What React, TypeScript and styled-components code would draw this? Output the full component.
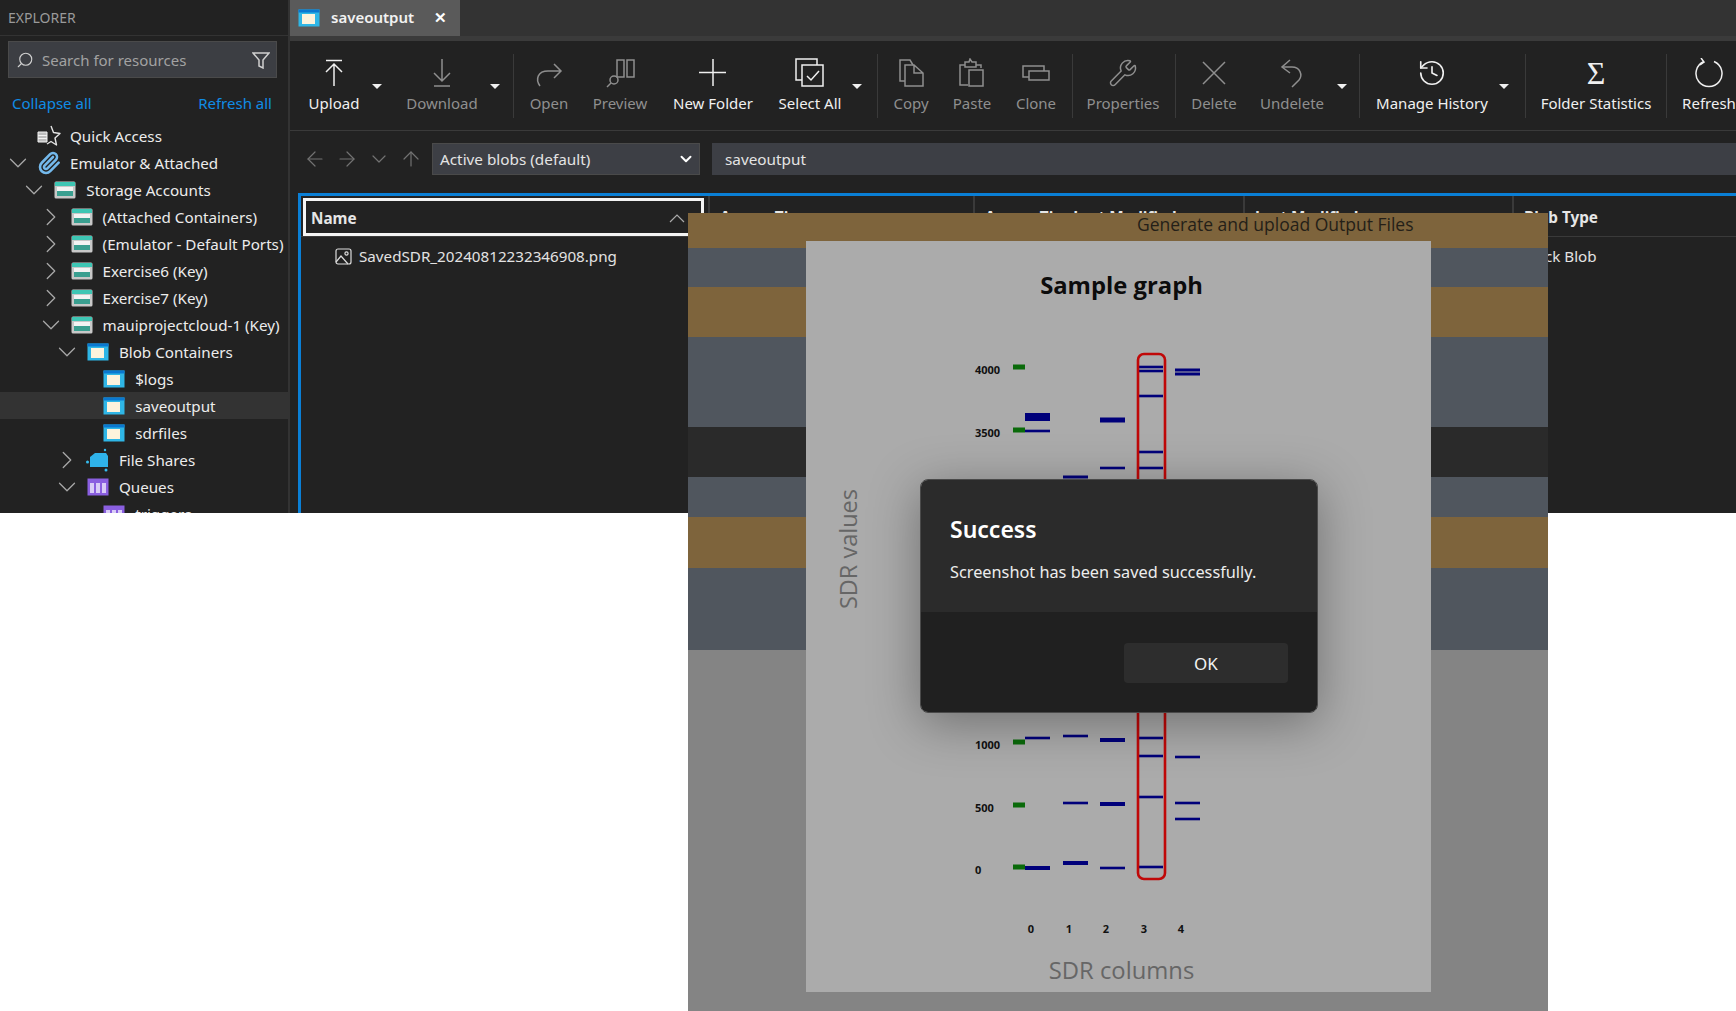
import {type FC, type ReactNode} from "react";
import styled, {createGlobalStyle} from "styled-components";
import {ArrowLeft, ArrowRight, ArrowUp, ChevronDown, ChevronRight, History, Paperclip, Search, Wrench} from "lucide-react";

const GlobalStyle = createGlobalStyle`
    html, body {
        margin: 0;
        background: #fff;
        overflow: hidden;
    }

    * {
        box-sizing: border-box;
    }
`;

const FONT = `"Noto Sans", "Open Sans", sans-serif`;

const SigmaGlyph = styled.div`
    font-family: "Liberation Serif", serif;
    font-size: 32px;
    line-height: 30px;
`;

const StorageIcon: FC = () => (
    <svg width="22" height="18" viewBox="0 0 22 18">
        <rect x="0.5" y="0.5" width="21" height="17" rx="1.5" fill="#c8c8c8"/>
        <rect x="1" y="1" width="20" height="4" fill="#3ec6b4"/>
        <rect x="3" y="6" width="16" height="4" fill="#f3f3f3"/>
        <rect x="3" y="10" width="16" height="5" fill="#3a9f90"/>
    </svg>
);

const ContainerIcon: FC = () => (
    <svg width="22" height="18" viewBox="0 0 22 18">
        <rect x="0.5" y="0.5" width="21" height="17" fill="#2fb6e6"/>
        <rect x="0.5" y="0.5" width="21" height="3" fill="#0a78d0"/>
        <rect x="4" y="5" width="13" height="10" fill="#fdf3dc"/>
    </svg>
);

const ShareIcon: FC = () => (
    <svg width="24" height="24" viewBox="0 0 24 24">
        <path d="M4 9 L9 5 H20 L22 8 V19 H4 Z" fill="#2fb3ea"/>
        <circle cx="1.5" cy="14" r="1.5" fill="#35bdf0"/>
        <circle cx="19" cy="2" r="1.2" fill="#35bdf0"/>
        <circle cx="20" cy="22" r="1.5" fill="#35bdf0"/>
    </svg>
);

const QueueIcon: FC = () => (
    <svg width="22" height="18" viewBox="0 0 22 18">
        <rect x="0.5" y="0.5" width="21" height="17" fill="#8a5fe0"/>
        <rect x="3" y="5" width="4" height="10" fill="#d9ccf7"/>
        <rect x="9" y="5" width="4" height="10" fill="#d9ccf7"/>
        <rect x="15" y="5" width="4" height="10" fill="#d9ccf7"/>
    </svg>
);

const QuickIcon: FC = () => (
    <svg width="24" height="22" viewBox="0 0 24 22" fill="none" stroke="#e4e4e4" strokeWidth="1.4">
        <path d="M14 1 L16.5 7.5 L23 8.5 L18 13 L19.5 20 L14 16.5 L10 19" strokeLinejoin="round"/>
        <path d="M1 7h9v10H1z M1 10.5h9 M1 13.5h9" fill="#bdbdbd" stroke="#f2f2f2" strokeWidth="1"/>
    </svg>
);

const ClipIcon: FC = () => (
    <Paperclip size={24} color="#74b9ec" strokeWidth={2.6}/>
);

type TreeRowData = {
    level: number;
    chevron?: "down" | "right";
    icon: ReactNode;
    label: string;
    selected?: boolean;
};

const TREE: TreeRowData[] = [
    {level: 0, icon: <QuickIcon/>, label: "Quick Access"},
    {level: 0, chevron: "down", icon: <ClipIcon/>, label: "Emulator & Attached"},
    {level: 1, chevron: "down", icon: <StorageIcon/>, label: "Storage Accounts"},
    {level: 2, chevron: "right", icon: <StorageIcon/>, label: "(Attached Containers)"},
    {level: 2, chevron: "right", icon: <StorageIcon/>, label: "(Emulator - Default Ports)"},
    {level: 2, chevron: "right", icon: <StorageIcon/>, label: "Exercise6 (Key)"},
    {level: 2, chevron: "right", icon: <StorageIcon/>, label: "Exercise7 (Key)"},
    {level: 2, chevron: "down", icon: <StorageIcon/>, label: "mauiprojectcloud-1 (Key)"},
    {level: 3, chevron: "down", icon: <ContainerIcon/>, label: "Blob Containers"},
    {level: 4, icon: <ContainerIcon/>, label: "$logs"},
    {level: 4, icon: <ContainerIcon/>, label: "saveoutput", selected: true},
    {level: 4, icon: <ContainerIcon/>, label: "sdrfiles"},
    {level: 3, chevron: "right", icon: <ShareIcon/>, label: "File Shares"},
    {level: 3, chevron: "down", icon: <QueueIcon/>, label: "Queues"},
    {level: 4, icon: <QueueIcon/>, label: "triggers"},
];

const Glyph: FC<{ children: ReactNode }> = ({children}) => (
    <svg width="30" height="30" viewBox="0 0 30 30" fill="none" stroke="currentColor" strokeWidth="1.5">
        {children}
    </svg>
);

type ToolItem =
    | { kind: "button"; label: string; width: number; left?: number; dim?: boolean; icon: ReactNode }
    | { kind: "caret"; width: number }
    | { kind: "sep"; left: number };

const TOOLS: ToolItem[] = [
    {
        kind: "button", label: "Upload", width: 64, icon: (
            <Glyph><path d="M7 2.5h16 M15 28V6 M7 14l8-8 8 8"/></Glyph>
        )
    },
    {kind: "caret", width: 22},
    {
        kind: "button", label: "Download", width: 94, left: 7, dim: true, icon: (
            <Glyph><path d="M15 1v22 M7 15l8 8 8-8 M7 28h16"/></Glyph>
        )
    },
    {kind: "caret", width: 12},
    {kind: "sep", left: 12},
    {
        kind: "button", label: "Open", width: 46, dim: true, icon: (
            <Glyph><path d="M6 28c-5-7-2-15 8-15h13 M20 6l7 7-7 7"/></Glyph>
        )
    },
    {
        kind: "button", label: "Preview", width: 96, dim: true, icon: (
            <Glyph>
                <path d="M12 19V2h7v17z M22 2h7v17h-7z"/>
                <circle cx="9" cy="22" r="4"/>
                <path d="M6 25l-4 4"/>
            </Glyph>
        )
    },
    {
        kind: "button", label: "New Folder", width: 90, icon: (
            <Glyph><path d="M15 1v27 M1 14.5h27"/></Glyph>
        )
    },
    {
        kind: "button", label: "Select All", width: 78, left: 13, icon: (
            <Glyph>
                <path d="M7 22H1V1h21v6"/>
                <path d="M7 7h21v21H7z"/>
                <path d="M12 18l4 4 8-9"/>
            </Glyph>
        )
    },
    {kind: "caret", width: 16},
    {kind: "sep", left: 12},
    {
        kind: "button", label: "Copy", width: 42, dim: true, icon: (
            <Glyph>
                <path d="M9 23H4V2h10l3 5"/>
                <path d="M9 7h9l9 8v13H9z M18 7v8h9"/>
            </Glyph>
        )
    },
    {
        kind: "button", label: "Paste", width: 80, dim: true, icon: (
            <Glyph>
                <path d="M11 27H3V7h5 M19 7h5v3"/>
                <path d="M8 4h4l1-3 2 3h4v5H8z"/>
                <path d="M12 12h14v16H12z"/>
            </Glyph>
        )
    },
    {
        kind: "button", label: "Clone", width: 48, dim: true, icon: (
            <Glyph>
                <path d="M8 19H2V8h21v5"/>
                <path d="M8 13h20v9H8z"/>
            </Glyph>
        )
    },
    {kind: "sep", left: 12},
    {
        kind: "button", label: "Properties", width: 76, dim: true, icon: (
            <Wrench size={30} strokeWidth={1.2}/>
        )
    },
    {kind: "sep", left: 14},
    {
        kind: "button", label: "Delete", width: 52, dim: true, icon: (
            <Glyph><path d="M4 4l22 22 M26 4L4 26"/></Glyph>
        )
    },
    {
        kind: "button", label: "Undelete", width: 84, left: 10, dim: true, icon: (
            <Glyph>
                <path d="M13 2L5 9l8 6"/>
                <path d="M5 9h10c8 0 11 8 7 13l-7 7"/>
            </Glyph>
        )
    },
    {kind: "caret", width: 16},
    {kind: "sep", left: 9},
    {
        kind: "button", label: "Manage History", width: 120, icon: (
            <History size={30} strokeWidth={1.3}/>
        )
    },
    {kind: "caret", width: 24},
    {kind: "sep", left: 9},
    {
        kind: "button", label: "Folder Statistics", width: 116, icon: (
            <SigmaGlyph>Σ</SigmaGlyph>
        )
    },
    {kind: "sep", left: 12},
    {
        kind: "button", label: "Refresh", width: 60, icon: (
            <Glyph>
                <path d="M10 3.5A13 13 0 1 0 20 3.5"/>
                <path d="M7 0l3 4-4 3"/>
            </Glyph>
        )
    },
];

// page coordinates of the pasted graph, x is the left edge of the bar
const COL_X = [1025, 1063, 1100, 1138, 1175];
const BARS: [number, number, number][] = [
    [0, 417, 8], [0, 431, 2.6], [0, 738, 2.6], [0, 868, 4],
    [1, 477, 3], [1, 736, 2.6], [1, 803, 2.6], [1, 863, 4],
    [2, 420, 5], [2, 468, 2.6], [2, 740, 4], [2, 804, 4], [2, 868, 2.6],
    [3, 367, 2.6], [3, 371, 2.6], [3, 396, 2.6], [3, 452, 2.6], [3, 468, 2.6], [3, 738, 2.6], [3, 756, 2.6], [3, 797, 2.6], [3, 867, 2.6],
    [4, 370, 3], [4, 374, 3], [4, 757, 2.6], [4, 803, 2.6], [4, 819, 2.6],
];
const TICKS = [367, 430, 492, 555, 617, 680, 742, 805, 867];
const Y_LABELS: [string, number][] = [["4000", 367], ["3500", 430], ["1000", 742], ["500", 805], ["0", 867]];

const App: FC = () => {
    return (
        <Page>
            <GlobalStyle/>
            <AppWindow>
                <Sidebar>
                    <SidebarHeader>EXPLORER</SidebarHeader>
                    <SearchBox>
                        <Search size={18} strokeWidth={1.5} style={{transform: "scaleX(-1)"}}/>
                        <SearchText>Search for resources</SearchText>
                        <svg width="18" height="18" viewBox="0 0 18 18" fill="none" stroke="#cfcfcf" strokeWidth="1.5">
                            <path d="M1 2h16l-6 7v8l-4-2V9z"/>
                        </svg>
                    </SearchBox>
                    <LinkRow>
                        <LinkText>Collapse all</LinkText>
                        <LinkText>Refresh all</LinkText>
                    </LinkRow>
                    <Tree>
                        {TREE.map(row => (
                            <TreeRow key={row.label} $level={row.level} $selected={!!row.selected}>
                                <ChevronBox>
                                    {row.chevron === "down" && <ChevronDown size={30} strokeWidth={1}/>}
                                    {row.chevron === "right" && <ChevronRight size={30} strokeWidth={1}/>}
                                </ChevronBox>
                                <TreeIcon>{row.icon}</TreeIcon>
                                <TreeLabel>{row.label}</TreeLabel>
                            </TreeRow>
                        ))}
                    </Tree>
                </Sidebar>

                <Main>
                    <TabStrip>
                        <Tab>
                            <ContainerIcon/>
                            <TabLabel>saveoutput</TabLabel>
                            <TabClose>✕</TabClose>
                        </Tab>
                    </TabStrip>

                    <Toolbar>
                        {TOOLS.map((item, i) => {
                            if (item.kind === "sep") return <ToolSep key={i} $left={item.left}/>;
                            if (item.kind === "caret") return <ToolCaret key={i} $width={item.width}/>;
                            return (
                                <ToolButton key={i} $width={item.width} $left={item.left ?? 0} $dim={!!item.dim}>
                                    <ToolIcon>{item.icon}</ToolIcon>
                                    <ToolLabel>{item.label}</ToolLabel>
                                </ToolButton>
                            );
                        })}
                    </Toolbar>

                    <NavRow>
                        <NavArrows>
                            <ArrowLeft size={24} strokeWidth={1.2}/>
                            <ArrowRight size={24} strokeWidth={1.2}/>
                            <ChevronDown size={24} strokeWidth={1.2}/>
                            <ArrowUp size={24} strokeWidth={1.2}/>
                        </NavArrows>
                        <Select>
                            Active blobs (default)
                            <ChevronDown size={18} strokeWidth={2.6} color="#fff"/>
                        </Select>
                        <PathBox>saveoutput</PathBox>
                    </NavRow>

                    <Grid>
                        <GridHead>
                            <NameHead>
                                Name
                                <svg width="16" height="10" viewBox="0 0 16 10" fill="none" stroke="#aaa" strokeWidth="1.2">
                                    <path d="M1 9l7-7 7 7"/>
                                </svg>
                            </NameHead>
                            <HeadCell>Access Tier</HeadCell>
                            <HeadCell>Access Tier Last Modified</HeadCell>
                            <HeadCell>Last Modified</HeadCell>
                            <HeadCell>Blob Type</HeadCell>
                        </GridHead>
                        <GridRow>
                            <FileCell>
                                <svg width="17" height="17" viewBox="0 0 17 17" fill="none" stroke="#ddd" strokeWidth="1.2">
                                    <rect x="1" y="1" width="15" height="15" rx="2"/>
                                    <path d="M1 14l5-6 7 8"/>
                                    <circle cx="11.5" cy="5.5" r="1.6"/>
                                </svg>
                                SavedSDR_20240812232346908.png
                            </FileCell>
                            <span/>
                            <span/>
                            <span/>
                            <BodyCell>Block Blob</BodyCell>
                        </GridRow>
                    </Grid>
                </Main>
            </AppWindow>

            <Shot>
                <ShotBands>
                    <Band $height={35} $color="#7e643c">
                        <ShotCaption>Generate and upload Output Files</ShotCaption>
                    </Band>
                    <Band $height={39} $color="#50565e"/>
                    <Band $height={50} $color="#7e643c"/>
                    <Band $height={90} $color="#50565e"/>
                    <Band $height={50} $color="#2a2a2a"/>
                    <Band $height={40} $color="#50565e"/>
                    <Band $height={51} $color="#7e643c"/>
                    <Band $height={82} $color="#50565e"/>
                    <Band $height={361} $color="#848484"/>
                </ShotBands>

                <GraphPaper>
                    <GraphTitle>Sample graph</GraphTitle>
                    <YAxisTitle>SDR values</YAxisTitle>
                    <svg width="625" height="615" viewBox="806 330 625 615">
                        {TICKS.map(y => (
                            <rect key={y} x={1013} y={y - 2.5} width={12} height={5} fill="#0a6a0a"/>
                        ))}
                        {BARS.map(([col, y, h], i) => (
                            <rect key={i} x={COL_X[col]} y={y - h / 2} width={25} height={h} fill="#00007a"/>
                        ))}
                        <rect x={1138} y={354} width={27} height={525} rx={6} fill="none" stroke="#c00808"
                              strokeWidth={2.6}/>
                        {Y_LABELS.map(([label, y]) => (
                            <ChartText key={label} x={975} y={y + 7}>{label}</ChartText>
                        ))}
                        {COL_X.map((x, i) => (
                            <ChartText key={x} x={x + 6} y={933} textAnchor="middle">{i}</ChartText>
                        ))}
                    </svg>
                    <XAxisTitle>SDR columns</XAxisTitle>
                </GraphPaper>

                <Dialog>
                    <DialogBody>
                        <DialogTitle>Success</DialogTitle>
                        <DialogMessage>Screenshot has been saved successfully.</DialogMessage>
                    </DialogBody>
                    <DialogFooter>
                        <OkButton>OK</OkButton>
                    </DialogFooter>
                </Dialog>
            </Shot>
        </Page>
    );
};

export default App;

const GRID_COLUMNS = "407px 265px 270px 269px 1fr";

const Page = styled.div`
    position: relative;

    width: 1736px;
    height: 1011px;

    overflow: hidden;

    font-family: ${FONT};
`;

const AppWindow = styled.div`
    display: flex;

    height: 513px;

    overflow: hidden;

    background: #222;
    color: #e6e6e6;
`;

const Sidebar = styled.div`
    display: flex;
    flex-direction: column;
    flex: 0 0 290px;
    min-width: 0;

    overflow: hidden;

    border-right: 2px solid #333;
`;

const SidebarHeader = styled.div`
    flex: none;

    height: 36px;
    padding-left: 8px;

    display: flex;
    align-items: center;

    border-bottom: 1px solid #333;

    font-size: 14px;
    color: #9a9a9a;
`;

const SearchBox = styled.div`
    flex: none;

    display: flex;
    align-items: center;

    margin: 5px 11px 0 8px;
    height: 37px;
    padding: 0 6px 0 7px;

    background: #3c3e43;
    border: 1px solid #4a4a4a;

    color: #d0d0d0;
`;

const SearchText = styled.div`
    flex: 1;

    margin-left: 8px;

    font-size: 15px;
    color: #a2a2a2;
`;

const LinkRow = styled.div`
    flex: none;

    display: flex;
    justify-content: space-between;

    margin-top: 14px;
    padding: 0 16px 0 12px;
`;

const LinkText = styled.div`
    font-size: 15px;
    line-height: 22px;

    color: #108ce6;
`;

const Tree = styled.div`
    flex: none;

    margin-top: 8px;
`;

const TreeRow = styled.div<{ $level: number; $selected: boolean }>`
    display: flex;
    align-items: center;

    height: 27px;
    padding-left: ${p => 8 + p.$level * 16.3}px;

    background: ${p => p.$selected ? "#333" : "transparent"};
`;

const ChevronBox = styled.div`
    flex: 0 0 20px;
    min-width: 0;
    height: 27px;

    display: flex;
    align-items: center;
    justify-content: center;

    color: #a8a8a8;

    svg {
        flex: none;
    }
`;

const TreeIcon = styled.div`
    flex: 0 0 22px;
    min-width: 0;

    margin-left: 10px;

    display: flex;
    align-items: center;
    justify-content: center;

    svg {
        flex: none;
    }
`;

const TreeLabel = styled.div`
    margin-left: 10px;

    font-size: 15.2px;
    white-space: nowrap;

    color: #ececec;
`;

const Main = styled.div`
    flex: 1;
    min-width: 0;

    display: flex;
    flex-direction: column;
`;

const TabStrip = styled.div`
    flex: 0 0 41px;

    background: #333;
    border-bottom: 5px solid #3b3b3b;
`;

const Tab = styled.div`
    display: flex;
    align-items: center;

    width: 170px;
    height: 36px;
    padding-left: 8px;

    background: #5a5a5a;
`;

const TabLabel = styled.div`
    margin-left: 11px;
    margin-bottom: 3px;

    font-size: 15px;
    font-weight: 600;

    color: #f2f2f2;
`;

const TabClose = styled.div`
    margin-left: 20px;
    margin-bottom: 3px;

    font-size: 15px;
    font-weight: 900;

    color: #fff;
`;

const Toolbar = styled.div`
    flex: 0 0 90px;

    display: flex;
    align-items: flex-start;

    padding-left: 12px;

    overflow: hidden;

    border-bottom: 1px solid #3a3a3a;
`;

const ToolButton = styled.div<{ $width: number; $left: number; $dim: boolean }>`
    flex: 0 0 ${p => p.$width}px;

    margin-left: ${p => p.$left}px;
    padding-top: 17px;

    display: flex;
    flex-direction: column;
    align-items: center;

    color: ${p => p.$dim ? "#8f8f8f" : "#f0f0f0"};
`;

const ToolIcon = styled.div`
    height: 30px;

    display: flex;
    align-items: center;
    justify-content: center;
`;

const ToolLabel = styled.div`
    margin-top: 5px;

    font-size: 15px;
    line-height: 20px;
    white-space: nowrap;
`;

const ToolCaret = styled.div<{ $width: number }>`
    flex: 0 0 ${p => p.$width}px;

    margin-top: 43px;
    height: 6px;

    display: flex;
    justify-content: center;

    &::before {
        content: "";

        border-left: 5px solid transparent;
        border-right: 5px solid transparent;
        border-top: 5px solid #f0f0f0;
    }
`;

const ToolSep = styled.div<{ $left: number }>`
    flex: 0 0 1px;

    height: 64px;
    margin: 13px 12px 0 ${p => p.$left}px;

    background: #3a3a3a;
`;

const NavRow = styled.div`
    flex: 0 0 62px;

    display: flex;
    align-items: flex-start;

    padding: 12px 0 0 13px;
`;

const NavArrows = styled.div`
    display: flex;
    align-items: center;
    gap: 8px;

    height: 32px;

    color: #727272;
`;

const Select = styled.div`
    flex: 0 0 268px;

    display: flex;
    align-items: center;
    justify-content: space-between;

    height: 32px;
    margin-left: 9px;
    padding: 0 4px 0 7px;

    background: #3d3f45;
    border: 1px solid #4a4a4a;

    font-size: 15.3px;
    color: #e4e4e4;
`;

const PathBox = styled.div`
    flex: 1;

    display: flex;
    align-items: center;

    height: 32px;
    margin-left: 12px;
    padding-left: 13px;

    background: #3d3f45;

    font-size: 15.3px;
    color: #e4e4e4;
`;

const Grid = styled.div`
    flex: 1;

    margin-left: 8px;

    border-top: 3px solid #0a7fd6;
    border-left: 3px solid #0a7fd6;
`;

const GridHead = styled.div`
    display: grid;
    grid-template-columns: ${GRID_COLUMNS};

    height: 41px;

    border-bottom: 1px solid #3a3a3a;
`;

const NameHead = styled.div`
    display: flex;
    align-items: center;
    justify-content: space-between;

    margin: 2px 4px 0 2px;
    padding: 1px 16px 0 5px;

    border: 3px solid #f4f4f4;

    font-size: 15.3px;
    font-weight: 700;
`;

const HeadCell = styled.div`
    display: flex;
    align-items: center;

    padding: 2px 0 0 10px;

    border-left: 2px solid #3a3a3a;

    font-size: 15.3px;
    font-weight: 700;
`;

const GridRow = styled.div`
    display: grid;
    grid-template-columns: ${GRID_COLUMNS};

    height: 38px;

    font-size: 15.2px;
    color: #e2e2e2;
`;

const FileCell = styled.div`
    display: flex;
    align-items: center;
    gap: 7px;

    padding-left: 34px;
`;

const BodyCell = styled.div`
    display: flex;
    align-items: center;

    padding-left: 10px;
`;

const Shot = styled.div`
    position: absolute;
    left: 688px;
    top: 213px;

    width: 860px;
    height: 798px;

    overflow: hidden;

    font-family: "Open Sans", sans-serif;
`;

const ShotBands = styled.div`
    display: flex;
    flex-direction: column;

    height: 100%;
`;

const Band = styled.div<{ $height: number; $color: string }>`
    flex: 0 0 ${p => p.$height}px;

    background: ${p => p.$color};
`;

const ShotCaption = styled.div`
    padding-left: 449px;

    font-size: 17.5px;
    line-height: 22px;

    color: #241f18;
`;

const GraphPaper = styled.div`
    position: absolute;
    left: 118px;
    top: 28px;

    width: 625px;
    height: 751px;

    display: flex;
    flex-direction: column;
    align-items: center;

    background: #ababab;
`;

const GraphTitle = styled.div`
    margin: 29px 0 30px 6px;

    font-size: 23.8px;
    font-weight: 700;
    line-height: 30px;

    color: #0c0c0c;
`;

const YAxisTitle = styled.div`
    position: absolute;
    left: 28px;
    top: 248px;

    writing-mode: vertical-rl;
    transform: rotate(180deg);

    font-size: 23.5px;
    line-height: 28px;

    color: #666;
`;

const XAxisTitle = styled.div`
    margin: 10px 0 0 6px;

    font-size: 23.8px;
    line-height: 30px;

    color: #666;
`;

const ChartText = styled.text`
    font-family: "Open Sans", sans-serif;
    font-size: 11px;
    font-weight: 700;

    fill: #111;
`;

const Dialog = styled.div`
    position: absolute;
    left: 232px;
    top: 266px;

    width: 398px;
    height: 234px;

    display: flex;
    flex-direction: column;

    overflow: hidden;

    border: 1px solid #4a4a4a;
    border-radius: 8px;
    box-shadow: 0 10px 50px rgba(0, 0, 0, 0.35);

    font-family: ${FONT};
`;

const DialogBody = styled.div`
    flex: 0 0 132px;

    padding: 35px 29px 0;

    background: #2b2b2b;
`;

const DialogTitle = styled.div`
    font-size: 23px;
    font-weight: 600;
    line-height: 28px;

    color: #fff;
`;

const DialogMessage = styled.div`
    margin-top: 19px;

    font-size: 16.3px;
    line-height: 20px;

    color: #ededed;
`;

const DialogFooter = styled.div`
    flex: 1;

    display: flex;
    justify-content: flex-end;

    padding: 31px 29px 0;

    background: #202020;
`;

const OkButton = styled.div`
    width: 164px;
    height: 40px;

    display: flex;
    align-items: center;
    justify-content: center;

    border-radius: 4px;
    background: #2d2d2d;

    font-size: 17px;
    color: #f2f2f2;
`;
